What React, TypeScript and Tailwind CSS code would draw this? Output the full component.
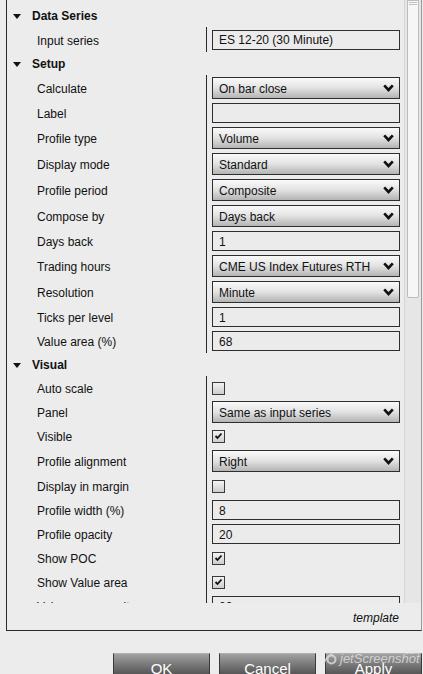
import React from 'react';

type Row =
  | { kind: 'header'; label: string }
  | { kind: 'text'; label: string; value: string; h: number }
  | { kind: 'select'; label: string; value: string; h: number }
  | { kind: 'check'; label: string; checked: boolean; h: number };

const rows: Row[] = [
  { kind: 'header', label: 'Data Series' },
  { kind: 'text', label: 'Input series', value: 'ES 12-20 (30 Minute)', h: 25 },
  { kind: 'header', label: 'Setup' },
  { kind: 'select', label: 'Calculate', value: 'On bar close', h: 26 },
  { kind: 'text', label: 'Label', value: '', h: 24 },
  { kind: 'select', label: 'Profile type', value: 'Volume', h: 26 },
  { kind: 'select', label: 'Display mode', value: 'Standard', h: 26 },
  { kind: 'select', label: 'Profile period', value: 'Composite', h: 26 },
  { kind: 'select', label: 'Compose by', value: 'Days back', h: 26 },
  { kind: 'text', label: 'Days back', value: '1', h: 24 },
  { kind: 'select', label: 'Trading hours', value: 'CME US Index Futures RTH', h: 26 },
  { kind: 'select', label: 'Resolution', value: 'Minute', h: 26 },
  { kind: 'text', label: 'Ticks per level', value: '1', h: 24 },
  { kind: 'text', label: 'Value area (%)', value: '68', h: 24 },
  { kind: 'header', label: 'Visual' },
  { kind: 'check', label: 'Auto scale', checked: false, h: 24 },
  { kind: 'select', label: 'Panel', value: 'Same as input series', h: 24 },
  { kind: 'check', label: 'Visible', checked: true, h: 24 },
  { kind: 'select', label: 'Profile alignment', value: 'Right', h: 26 },
  { kind: 'check', label: 'Display in margin', checked: false, h: 24 },
  { kind: 'text', label: 'Profile width (%)', value: '8', h: 24 },
  { kind: 'text', label: 'Profile opacity', value: '20', h: 24 },
  { kind: 'check', label: 'Show POC', checked: true, h: 24 },
  { kind: 'check', label: 'Show Value area', checked: true, h: 24 },
  { kind: 'text', label: 'Value area opacity', value: '20', h: 24 },
];

const Chevron = () => (
  <svg width="11" height="8" viewBox="0 0 11 8" className="shrink-0">
    <path d="M1.2 1.4 L5.5 6 L9.8 1.4" fill="none" stroke="#111" strokeWidth="2.6" />
  </svg>
);

const Check = ({ checked }: { checked: boolean }) => (
  <div className="w-[13px] h-[13px] border border-[#3a3a3a] bg-gradient-to-b from-[#f4f4f4] to-[#cdcdcd] flex items-center justify-center">
    {checked && (
      <svg width="9" height="8" viewBox="0 0 9 8">
        <path d="M1.5 4 L3.5 6 L7.5 1.5" fill="none" stroke="#111" strokeWidth="1.8" />
      </svg>
    )}
  </div>
);

const Control = ({ row }: { row: Row }) => {
  if (row.kind === 'text') {
    return (
      <div className="w-[188px] h-[20px] border border-[#2e2e2e] bg-[#ebebeb] pl-[6px] pt-[1px] flex items-center text-[12px] text-[#111]">
        {row.value}
      </div>
    );
  }
  if (row.kind === 'select') {
    return (
      <div className="w-[188px] h-[22px] border border-[#2e2e2e] bg-gradient-to-b from-[#fafafa] via-[#e2e2e2] to-[#b4b4b4] pl-[6px] pr-[5px] flex items-center justify-between text-[12px] text-[#111]">
        <span className="pt-[1px]">{row.value}</span>
        <Chevron />
      </div>
    );
  }
  if (row.kind === 'check') return <Check checked={row.checked} />;
  return null;
};

export default function App() {
  return (
    <div className="w-[423px] h-[674px] bg-[#ececec] overflow-hidden relative font-['Liberation_Sans',Arial,sans-serif] text-[12px] text-[#111]">
      <div className="ml-[6px] w-[416px] h-[631px] border-l border-r border-b border-l-[#2a2a2a] border-b-[#2a2a2a] border-r-[#9a9a9a] flex flex-col">
        <div className="h-[603px] flex overflow-hidden">
          <div className="w-[397px] pt-[4px]">
            {rows.map((row, i) =>
              row.kind === 'header' ? (
                <div key={i} className="h-[23px] flex items-center pl-[6px] pt-[1px]">
                  <svg width="8" height="5" viewBox="0 0 8 5" className="mr-[11px]">
                    <path d="M0 0 L8 0 L4 5 Z" fill="#111" />
                  </svg>
                  <span className="font-bold">{row.label}</span>
                </div>
              ) : (
                <div key={i} className="flex" style={{ height: row.h }}>
                  <div className="w-[199px] pl-[30px] pt-[2px] flex items-center whitespace-nowrap">{row.label}</div>
                  <div className="w-[198px] border-l border-[#2a2a2a] pl-[5px] flex items-center">
                    <Control row={row} />
                  </div>
                </div>
              )
            )}
          </div>
          <div className="w-[17px] bg-[#e6e6e6] border-l border-[#d6d6d6]">
            <div className="ml-[2px] w-[12px] h-[298px] bg-[#f6f6f6] border border-[#bdbdbd] rounded-b-[2px] flex flex-col items-center pt-[1px] gap-[1px]">
              <div className="w-[8px] h-px bg-[#c4c4c4]" />
              <div className="w-[8px] h-px bg-[#c4c4c4]" />
            </div>
          </div>
        </div>
        <div className="flex-1 flex items-center justify-end pr-[22px] pt-[2px] italic text-[12px]">template</div>
      </div>
      <div className="flex pl-[113px] mt-[22px] gap-[9px]">
        {['OK', 'Cancel', 'Apply'].map((b) => (
          <div
            key={b}
            className="w-[97px] h-[30px] border border-[#3a3a3a] border-t-[#b0b0b0] bg-gradient-to-b from-[#a2a2a2] via-[#6c6c6c] to-[#3c3c3c] text-white text-[15px] flex justify-center pt-[6px] leading-[18px]"
          >
            {b}
          </div>
        ))}
      </div>
      <div className="absolute left-[323px] top-[652px] flex items-center gap-[2px] text-[#e4e4e4] opacity-75 italic">
        <svg width="15" height="13" viewBox="0 0 15 13">
          <circle cx="8.5" cy="6.5" r="4" fill="none" stroke="#e4e4e4" strokeWidth="2" />
          <path d="M1 11 Q3 3 9.5 1" fill="none" stroke="#e4e4e4" strokeWidth="1.5" />
        </svg>
        <span className="text-[13px] leading-[14px]">jetScreenshot</span>
        <span className="absolute right-[0px] top-[-6px] text-[8px] not-italic">com</span>
      </div>
    </div>
  );
}
